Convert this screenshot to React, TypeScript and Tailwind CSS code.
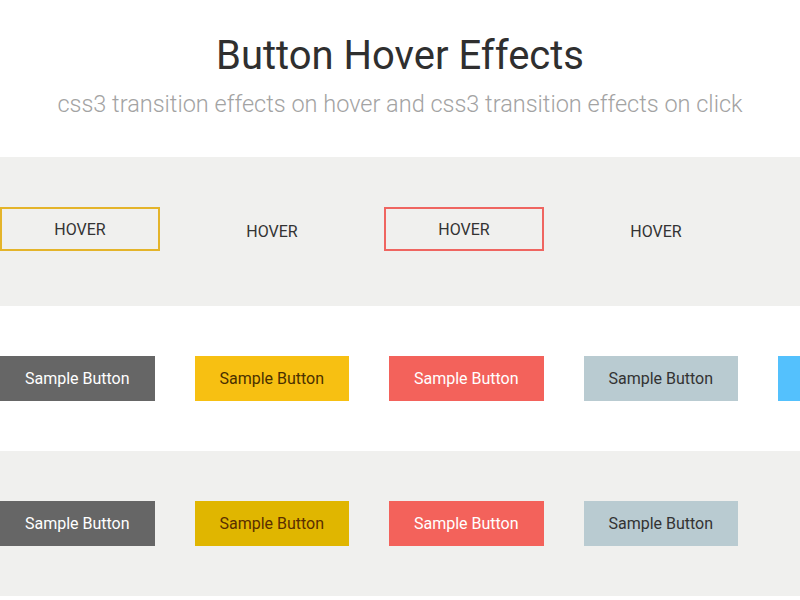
const font = { fontFamily: 'Roboto, "Liberation Sans", sans-serif' };

function HoverRow() {
    return (
        <div className="flex gap-[32px] whitespace-nowrap">
            <div className="w-[160px] h-[44px] shrink-0 border-2 border-[#e4b42a] flex items-center justify-center pt-[1px] text-[16px] text-[#333]">
                HOVER
            </div>
            <div className="w-[160px] h-[44px] shrink-0 flex items-center justify-center pt-[6px] text-[16px] text-[#333]">
                HOVER
            </div>
            <div className="w-[160px] h-[44px] shrink-0 border-2 border-[#ef6560] flex items-center justify-center pt-[1px] text-[16px] text-[#333]">
                HOVER
            </div>
            <div className="w-[160px] h-[44px] shrink-0 flex items-center justify-center pt-[6px] text-[16px] text-[#333]">
                HOVER
            </div>
        </div>
    );
}

interface SampleProps {
    bg: string;
    text: string;
}

function SampleButton({ bg, text }: SampleProps) {
    return (
        <div className={`w-[154.5px] h-[45px] shrink-0 flex items-center justify-center text-[16px] whitespace-nowrap ${bg} ${text}`}>
            Sample Button
        </div>
    );
}

export default function App() {
    return (
        <div className="w-[800px] h-[600px] overflow-hidden bg-white" style={font}>
            {/* Header */}
            <div className="h-[157px] flex flex-col items-center pt-[32px]">
                <h1 className="text-[40px] leading-[48px] font-normal text-[#2f2f2f]">Button Hover Effects</h1>
                <p className="text-[23.5px] leading-[30px] font-light text-[#a3a3a3] mt-[9px] whitespace-nowrap">
                    css3 transition effects on hover and css3 transition effects on click
                </p>
            </div>

            {/* Border hover row */}
            <section className="h-[149px] bg-[#f0f0ee] pt-[50px]">
                <HoverRow />
            </section>

            {/* Filled buttons */}
            <section className="h-[145px] bg-white pt-[50px] flex gap-[40px] overflow-hidden">
                <SampleButton bg="bg-[#666666]" text="text-white" />
                <SampleButton bg="bg-[#f7c012]" text="text-[#4a3000]" />
                <SampleButton bg="bg-[#f3625b]" text="text-white" />
                <SampleButton bg="bg-[#b9cbd1]" text="text-[#333]" />
                <SampleButton bg="bg-[#54c1fd]" text="text-white" />
            </section>

            {/* Click effects */}
            <section className="h-[145px] bg-[#f0f0ee] pt-[50px] flex gap-[40px] overflow-hidden">
                <SampleButton bg="bg-[#666666]" text="text-white" />
                <SampleButton bg="bg-[#e0b600]" text="text-[#5a2e00]" />
                <SampleButton bg="bg-[#f3625b]" text="text-white" />
                <SampleButton bg="bg-[#b9cbd1]" text="text-[#333]" />
            </section>
        </div>
    );
}
